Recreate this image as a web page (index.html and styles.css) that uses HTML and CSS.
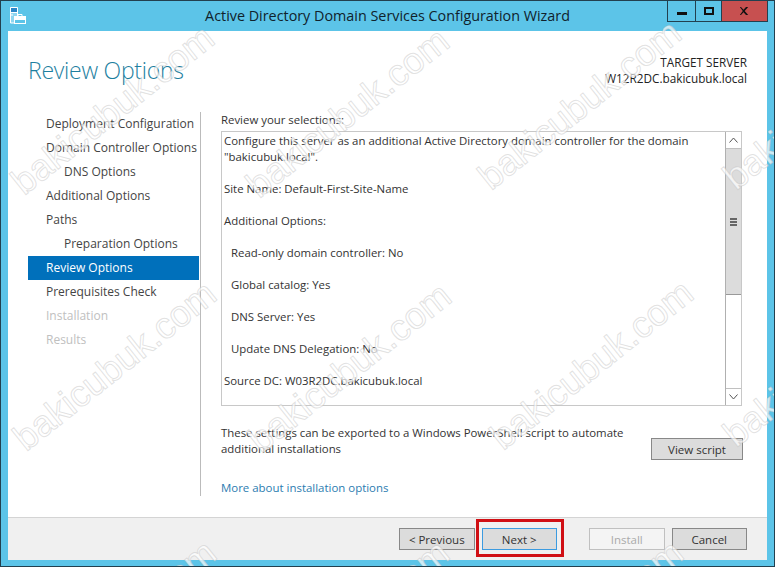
FILE: index.html
```html
<!DOCTYPE html>
<html lang="en">
<head>
<meta charset="utf-8">
<title>Active Directory Domain Services Configuration Wizard</title>
<link rel="stylesheet" href="styles.css">
</head>
<body>
<div class="window">
  <header class="titlebar">
    <svg class="appicon" width="16" height="17" viewBox="0 0 16 17">
      <path d="M.5.500h7v15.500h-7z" fill="#8fd6f0" stroke="#fff"/>
      <rect x="1" y="1" width="6" height="4" fill="#2a86c8"/>
      <path d="M.5 5.500h7M1 8h2" fill="none" stroke="#fff"/>
      <path d="M8 9.500v-2h4v2" fill="none" stroke="#fff"/>
      <rect x="4.500" y="9.500" width="11" height="7" fill="#5cc4e8" stroke="#fff"/>
      <path d="M4.500 12.500h11" fill="none" stroke="#fff"/>
      <rect x="5" y="10" width="10" height="2" fill="#fff"/>
    </svg>
    <div class="wintitle">Active Directory Domain Services Configuration Wizard</div>
    <div class="wincontrols">
      <div class="wc wc-min"><span class="min-glyph"></span></div>
      <div class="wc wc-max"><span class="max-glyph"></span></div>
      <div class="wc wc-close">
        <svg width="9" height="8" viewBox="0 0 9 8"><path d="M1 0l2.500 2.800L6 0h2.200L4.700 4l3.500 4H6L3.500 5.200 1 8H-.2l3-4L-.2 0z" fill="#111"/></svg>
      </div>
    </div>
  </header>
  <div class="client">
    <div class="pagehead">
      <h1 class="pagetitle">Review Options</h1>
      <div class="target">
        <div>TARGET SERVER</div>
        <div>W12R2DC.bakicubuk.local</div>
      </div>
    </div>
    <div class="middle">
      <nav class="steps">
        <div class="step">Deployment Configuration</div>
        <div class="step">Domain Controller Options</div>
        <div class="step sub">DNS Options</div>
        <div class="step">Additional Options</div>
        <div class="step">Paths</div>
        <div class="step sub">Preparation Options</div>
        <div class="step active">Review Options</div>
        <div class="step">Prerequisites Check</div>
        <div class="step off">Installation</div>
        <div class="step off">Results</div>
      </nav>
      <main class="pane">
        <div class="panelabel">Review your selections:</div>
        <div class="reviewbox">
          <div class="reviewtext">
            <p>Configure this server as an additional Active Directory domain controller for the domain<br>"bakicubuk.local".</p>
            <p>Site Name: Default-First-Site-Name</p>
            <p>Additional Options:</p>
            <p class="ind">Read-only domain controller: No</p>
            <p class="ind">Global catalog: Yes</p>
            <p class="ind">DNS Server: Yes</p>
            <p class="ind">Update DNS Delegation: No</p>
            <p>Source DC: W03R2DC.bakicubuk.local</p>
          </div>
          <div class="scrollbar">
            <div class="sbtn">
              <svg width="9" height="6" viewBox="0 0 9 6"><path d="M.5 5.500l4-4.500 4 4.500" fill="none" stroke="#555"/></svg>
            </div>
            <div class="thumb"><span class="grip"></span></div>
            <div class="track"></div>
            <div class="sbtn">
              <svg width="9" height="6" viewBox="0 0 9 6"><path d="M.5.500l4 4.500 4-4.500" fill="none" stroke="#555"/></svg>
            </div>
          </div>
        </div>
        <div class="exportrow">
          <div class="exporttext">These settings can be exported to a Windows PowerShell script to automate<br>additional installations</div>
          <button class="btn viewscript" type="button">View script</button>
        </div>
        <a class="morelink" href="#">More about installation options</a>
      </main>
    </div>
    <footer class="footer">
      <button class="btn" type="button">&lt; Previous</button>
      <button class="btn focus" type="button">Next &gt;</button>
      <button class="btn disabled" type="button">Install</button>
      <button class="btn" type="button">Cancel</button>
    </footer>
  </div>
  <div class="redmark"></div>
  <div class="wm w1">bakicubuk.com</div>
  <div class="wm w2">bakicubuk.com</div>
  <div class="wm w3">bakicubuk.com</div>
  <div class="wm w4">bakicubuk.com</div>
  <div class="wm w5">bakicubuk.com</div>
  <div class="wm w6">bakicubuk.com</div>
  <div class="wm w7">bakicubuk.com</div>
  <div class="wm w8">bakicubuk.com</div>
  <div class="wm w9">bakicubuk.com</div>
  <div class="wm w10">bakicubuk.com</div>
  <div class="wm w11">bakicubuk.com</div>
</div>
</body>
</html>
```
FILE: styles.css
```css
* { box-sizing: border-box; }
html, body { margin: 0; padding: 0; }
body { width: 775px; height: 567px; overflow: hidden; font-family: "Open Sans", "Noto Sans", sans-serif; font-size: 11.5px; color: #333; }
.window { position: relative; width: 775px; height: 567px; background: #5cc4e8; border: 1px solid #22404f; overflow: hidden; display: flex; flex-direction: column; padding: 0 7px 6px; }
.titlebar { position: relative; height: 30px; flex: none; display: flex; align-items: flex-start; }
.appicon { position: absolute; left: 2px; top: 6px; }
.wintitle { flex: 1; text-align: center; font-size: 14.35px; line-height: 30px; color: #10222c; }
.wincontrols { position: absolute; right: -1px; top: -1px; display: flex; height: 22px; border: 1px solid #22404f; border-top: 0; }
.wc { height: 21px; display: flex; align-items: center; justify-content: center; }
.wc-min { width: 27px; }
.wc-max { width: 26px; border-left: 1px solid #22404f; }
.wc-close { width: 46px; background: #c75050; border-left: 1px solid #22404f; }
.min-glyph { display: block; width: 10px; height: 3px; background: #111; margin-top: 5px; }
.max-glyph { display: block; width: 10px; height: 8px; border: 2px solid #111; }
.client { flex: 1; display: flex; flex-direction: column; background: #fff; min-height: 0; }
.pagehead { height: 81px; flex: none; display: flex; justify-content: space-between; padding: 0 20px; }
.pagetitle { margin: 25px 0 0; font-size: 23px; line-height: 28px; font-weight: 300; color: #1e7f9f; letter-spacing: -.25px; }
.target { margin-top: 23px; text-align: right; line-height: 16px; color: #222; font-size: 11.75px; }
.middle { flex: 1; display: flex; min-height: 0; padding-bottom: 21px; }
.steps { width: 193px; flex: none; border-right: 1px solid #bbb; padding-left: 20px; font-size: 12px; }
.step { height: 24px; line-height: 24px; padding-left: 18px; color: #444; margin-right: 1px; }
.step.sub { padding-left: 36px; }
.step.active { background: #0070bb; color: #fff; }
.step.off { color: #c0c0c0; }
.pane { flex: 1; padding: 0 24px 0 20px; display: flex; flex-direction: column; }
.panelabel { line-height: 16px; height: 22px; padding-top: 0; color: #333; font-size: 11.4px; }
.reviewbox { height: 275px; width: 521px; flex: none; border: 1px solid #c8c8c8; display: flex; }
.reviewtext { flex: 1; padding: 1px 2px; line-height: 16px; color: #333; font-size: 11.4px; }
.reviewtext p { margin: 0 0 16px; }
.reviewtext p.ind { padding-left: 7px; }
.scrollbar { width: 16px; flex: none; border-left: 1px solid #b0b0b0; display: flex; flex-direction: column; }
.sbtn { height: 17px; flex: none; display: flex; align-items: center; justify-content: center; border-bottom: 1px solid #c0c0c0; }
.sbtn:last-child { border-top: 1px solid #c0c0c0; border-bottom: 0; }
.thumb { height: 146px; flex: none; background: #dcdcdc; border-bottom: 1px solid #999; display: flex; align-items: center; justify-content: center; }
.grip { display: block; width: 7px; height: 8px; border-top: 2px solid #666; border-bottom: 2px solid #666; background: linear-gradient(#666,#666) center/100% 2px no-repeat; }
.track { flex: 1; }
.exportrow { display: flex; justify-content: space-between; margin-top: 19px; height: 36px; }
.exporttext { line-height: 16px; color: #333; font-size: 11.4px; }
.btn { font: inherit; height: 22px; width: 76px; padding: 0; background: #dcdcdc; border: 1px solid #888; color: #333; }
.viewscript { width: 92px; margin-top: 13px; }
.morelink { margin-top: 20px; line-height: 16px; color: #2b7cb0; text-decoration: none; font-size: 11.45px; }
.footer { height: 43px; flex: none; background: #f0f0f0; border-top: 1px solid #d4d4d4; display: flex; align-items: flex-start; padding: 10px 20px 0 391px; gap: 7px; }
.btn.focus { border-color: #3c9be0; }
.btn.disabled { background: #f4f4f4; border-color: #c0c0c0; color: #aaa; margin-left: 25px; }
.redmark { position: absolute; left: 475px; top: 518px; width: 88px; height: 38px; border: 3px solid #d00f14; }
.wm { position: absolute; width: 260px; height: 46px; line-height: 46px; text-align: center; font-family: "Liberation Sans", sans-serif; font-size: 37px; color: rgba(255,255,255,.7); -webkit-text-stroke: 1px rgba(185,185,185,.42); transform: rotate(-38.6deg); white-space: nowrap; }
.w1 { left: -18px; top: 86px; }
.w2 { left: 217px; top: 89px; }
.w3 { left: 449px; top: 81px; }
.w4 { left: 694px; top: 81px; }
.w5 { left: -16px; top: 342px; }
.w6 { left: 219px; top: 344px; }
.w7 { left: 461px; top: 341px; }
.w8 { left: 694px; top: 338px; }
.w9 { left: -16px; top: 601px; }
.w10 { left: 217px; top: 601px; }
.w11 { left: 451px; top: 601px; }
```
